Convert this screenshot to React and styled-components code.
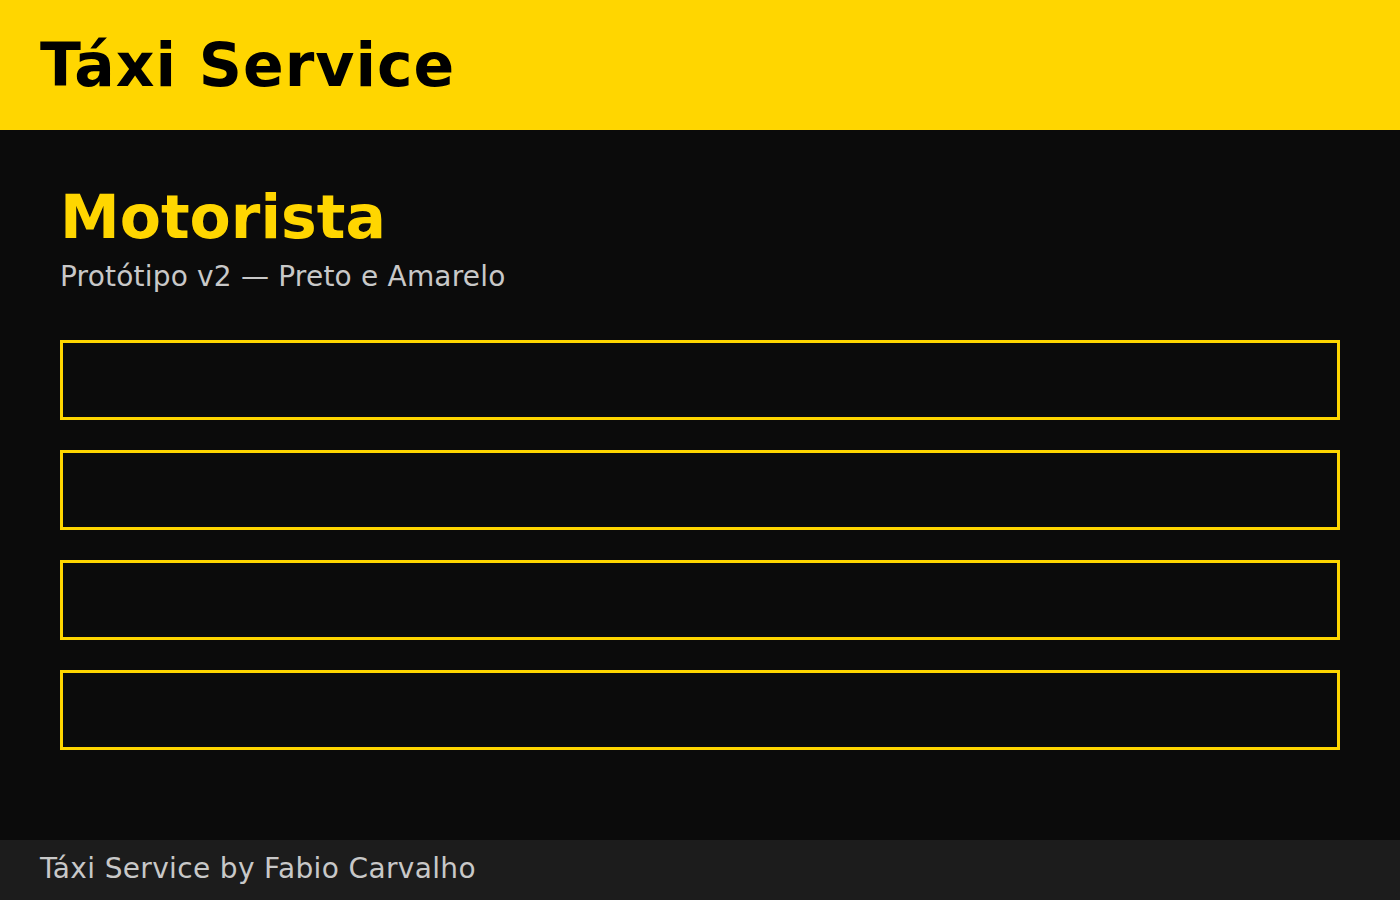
import styled, { createGlobalStyle } from "styled-components";

const GlobalStyle = createGlobalStyle`
  html, body {
    margin: 0;
    padding: 0;
    background: #0b0b0b;
    font-family: "DejaVu Sans", Verdana, sans-serif;
  }
  * {
    box-sizing: border-box;
  }
`;

const Page = styled.div`
  min-height: 100vh;
  display: flex;
  flex-direction: column;
  background: #0b0b0b;
`;

const Header = styled.header`
  height: 130px;
  background: #ffd600;
  display: flex;
  align-items: center;
  padding: 0 40px;
`;

const Brand = styled.h1`
  margin: 0;
  font-size: 60px;
  font-weight: 700;
  letter-spacing: 1px;
  color: #000;
`;

const Main = styled.main`
  flex: 1;
  padding: 52px 60px 0;
`;

const Title = styled.h2`
  margin: 0;
  font-size: 60px;
  font-weight: 700;
  color: #ffd600;
`;

const Subtitle = styled.p`
  margin: 8px 0 0;
  font-size: 28px;
  letter-spacing: 0.2px;
  color: #c8c8c8;
`;

const List = styled.div`
  margin-top: 47px;
  display: flex;
  flex-direction: column;
  gap: 30px;
`;

const Slot = styled.div`
  height: 80px;
  border: 3px solid #ffd600;
  background: #0b0b0b;
`;

const Footer = styled.footer`
  height: 60px;
  background: #1c1c1c;
  display: flex;
  align-items: center;
  padding: 0 40px 3px;
  font-size: 28px;
  letter-spacing: 0.35px;
  color: #c8c8c8;
`;

export default function App() {
  const slots = [1, 2, 3, 4];
  return (
    <>
      <GlobalStyle />
      <Page>
        <Header>
          <Brand>Táxi Service</Brand>
        </Header>
        <Main>
          <Title>Motorista</Title>
          <Subtitle>Protótipo v2 — Preto e Amarelo</Subtitle>
          <List>
            {slots.map((s) => (
              <Slot key={s} />
            ))}
          </List>
        </Main>
        <Footer>Táxi Service by Fabio Carvalho</Footer>
      </Page>
    </>
  );
}
